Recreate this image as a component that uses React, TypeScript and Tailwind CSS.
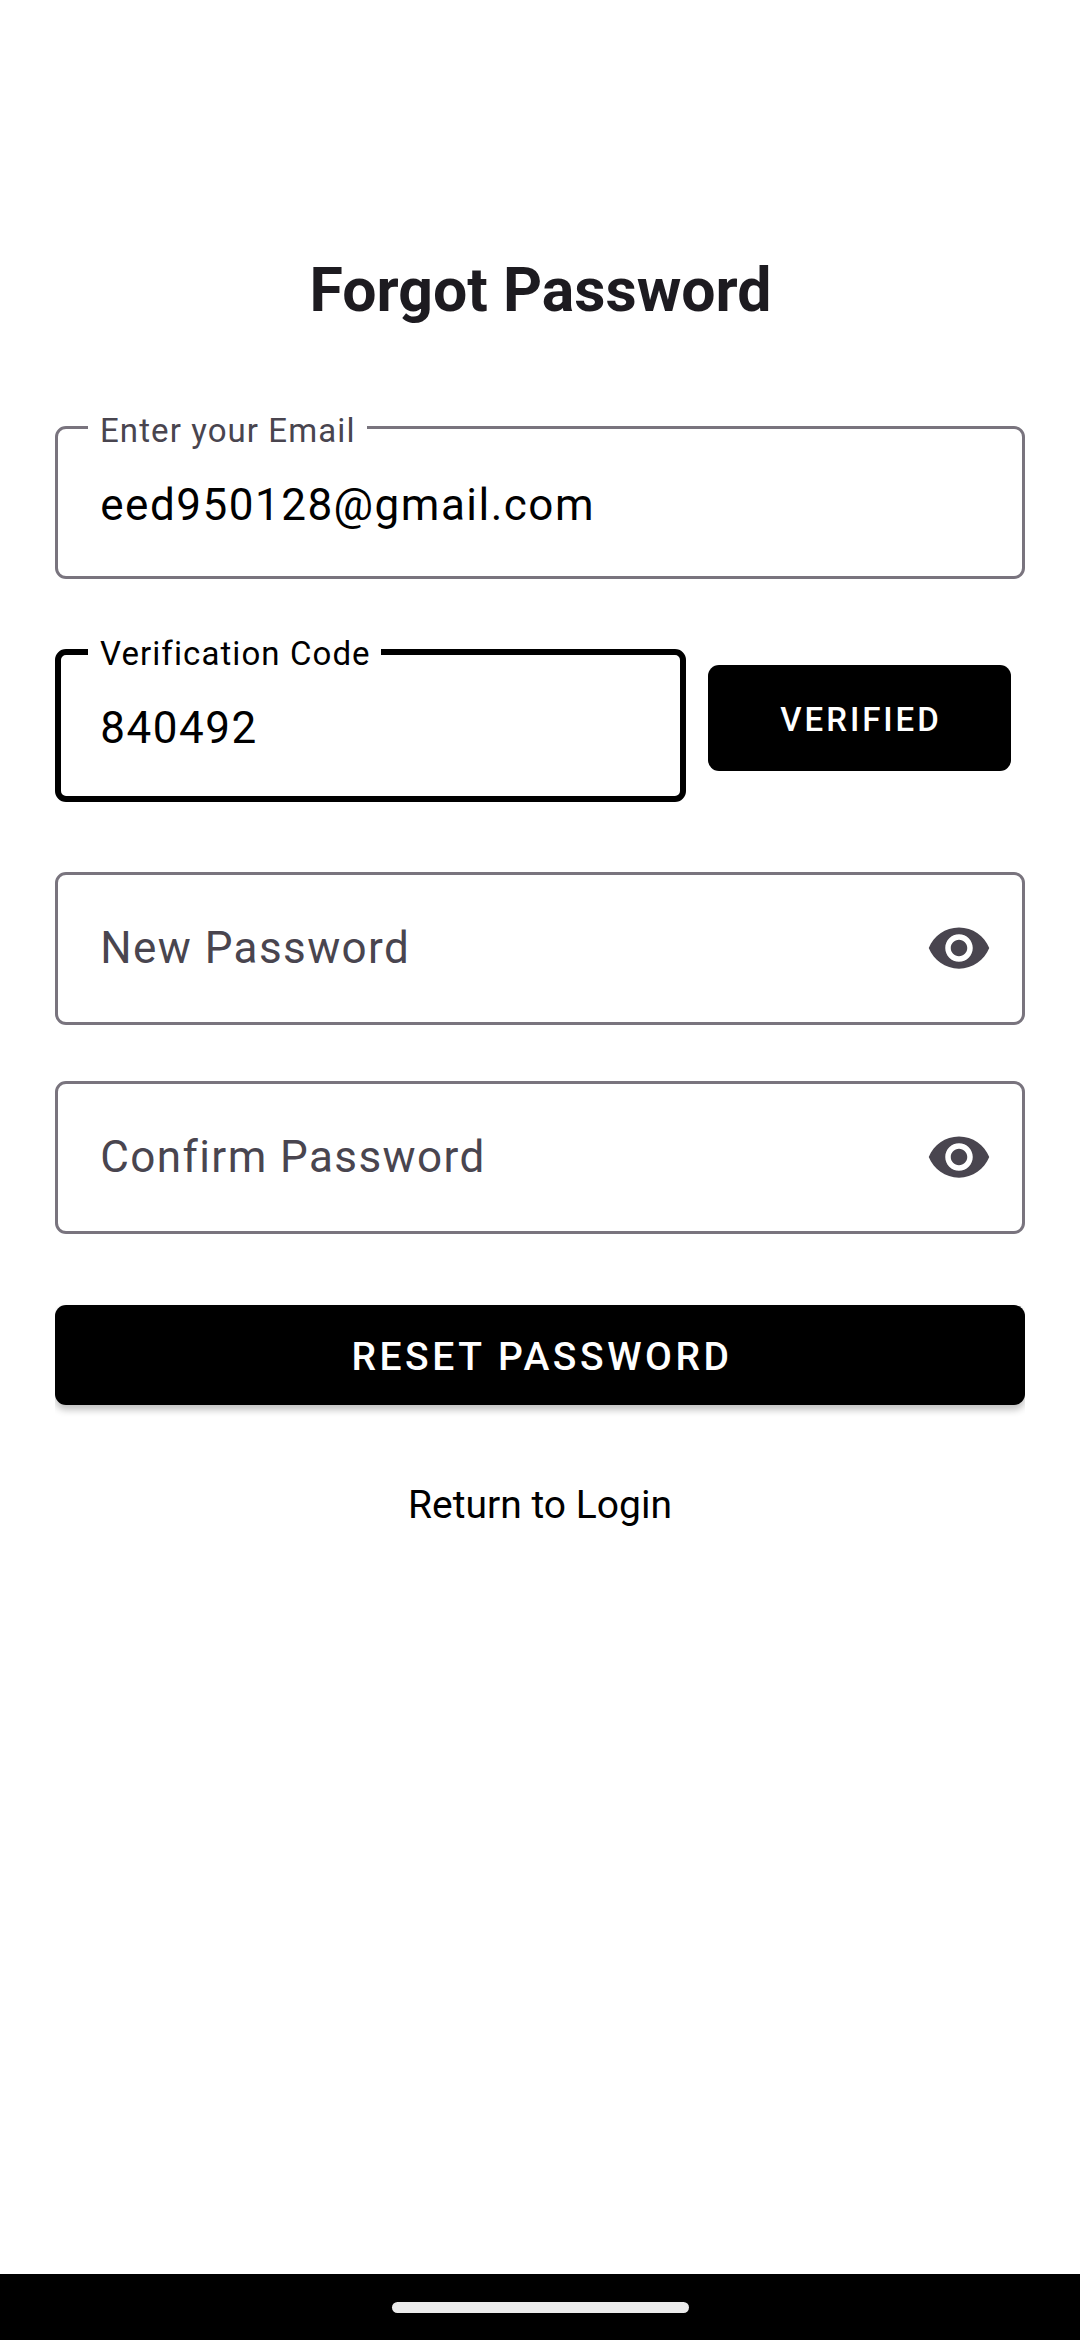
import type { ReactNode } from "react";

type FieldProps = {
  label: string;
  value: string;
  focused?: boolean;
  labelWidth: string;
  className?: string;
};

function FilledField({ label, value, focused = false, labelWidth, className = "" }: FieldProps) {
  return (
    <div
      className={`relative h-[153px] rounded-[11px] ${
        focused ? "border-[6px] border-black pt-[46px] pl-[39.3px]" : "border-[3px] border-[#79747e] pt-[49px] pl-[42.3px]"
      } ${className}`}
    >
      <span
        className={`absolute flex h-10 items-center whitespace-nowrap bg-white pl-3 text-[33px] leading-10 tracking-[0.033em] ${labelWidth} ${
          focused ? "-top-[21px] left-[27px] text-black" : "-top-[18px] left-[30px] text-[#49454f]"
        }`}
      >
        {label}
      </span>
      <div className="text-[44px] leading-[54px] tracking-[0.034em] text-black">{value}</div>
    </div>
  );
}

function EyeIcon() {
  return (
    <svg viewBox="0 0 24 24" className="mb-px size-[66px]" fill="#49454f" aria-hidden="true">
      <path d="M12 4.5C7 4.5 2.73 7.61 1 12c1.73 4.39 6 7.5 11 7.5s9.27-3.11 11-7.5c-1.73-4.39-6-7.5-11-7.5zM12 17c-2.76 0-5-2.24-5-5s2.24-5 5-5 5 2.24 5 5-2.24 5-5 5zm0-8c-1.66 0-3 1.34-3 3s1.34 3 3 3 3-1.34 3-3-1.34-3-3-3z" />
    </svg>
  );
}

function PasswordField({ children, className = "" }: { children: ReactNode; className?: string }) {
  return (
    <div
      className={`flex h-[153px] items-center justify-between rounded-[11px] border-[3px] border-[#79747e] pr-[30px] pl-[42.3px] ${className}`}
    >
      <span className="mb-px text-[44px] leading-[54px] tracking-[0.032em] text-[#49454f]">{children}</span>
      <EyeIcon />
    </div>
  );
}

export default function App() {
  return (
    <div className="flex h-[2340px] w-[1080px] flex-col bg-white font-['Roboto',sans-serif]">
      <main className="flex flex-1 flex-col px-[55px] pt-[255px]">
        <h1 className="pl-px text-center text-[60.75px] leading-[72px] font-bold text-[#1d1b20]">Forgot Password</h1>

        <FilledField label="Enter your Email" value="eed950128@gmail.com" labelWidth="w-[279px]" className="mt-[99px]" />

        <div className="mt-[70px] flex items-start">
          <FilledField label="Verification Code" value="840492" focused labelWidth="w-[293px]" className="w-[631px]" />
          <button className="mt-4 ml-[22px] flex h-[106px] w-[303px] items-center justify-center rounded-[11px] bg-black pt-1 pl-[3px] text-[33px] leading-10 font-medium tracking-[0.0892857em] text-white">
            VERIFIED
          </button>
        </div>

        <PasswordField className="mt-[70px]">New Password</PasswordField>
        <PasswordField className="mt-[56px]">Confirm Password</PasswordField>

        <div className="mt-[65px] overflow-hidden pt-[6px] pb-[18px]">
          <button className="flex h-[100px] w-full items-center justify-center rounded-[11px] bg-black pt-1 pl-[4px] text-[39px] leading-[46px] font-medium tracking-[0.091em] text-white shadow-[0_5px_7px_rgba(0,0,0,0.24)]">
            RESET PASSWORD
          </button>
        </div>

        <a className="mt-[59px] self-center text-[39px] leading-[46px] text-black">Return to Login</a>
      </main>

      <footer className="flex h-[66px] items-center justify-center bg-black">
        <div className="h-[11px] w-[297px] rounded-full bg-[#ebebeb]" />
      </footer>
    </div>
  );
}
